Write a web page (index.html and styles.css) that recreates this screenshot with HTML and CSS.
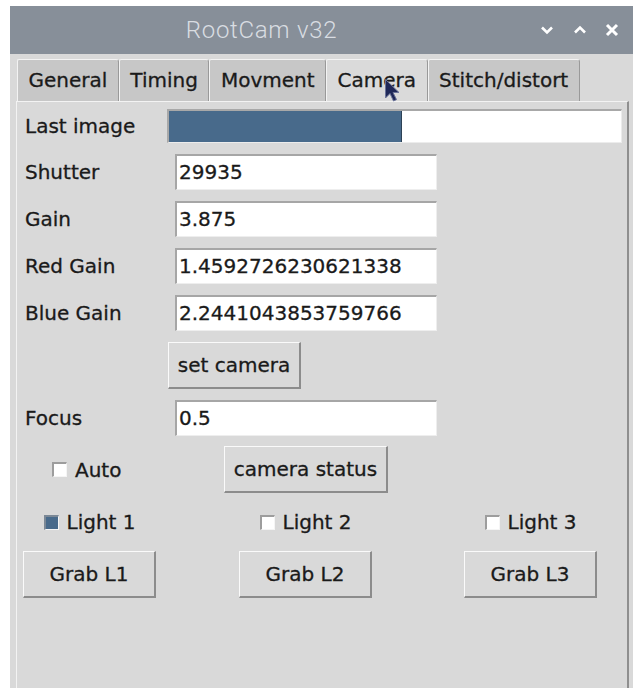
FILE: index.html
```html
<!DOCTYPE html>
<html lang="en">
<head>
<meta charset="utf-8">
<title>RootCam v32</title>
<link rel="stylesheet" href="styles.css">
</head>
<body>
<div class="window">
  <div class="titlebar">
    <div class="title">RootCam v32</div>
    <div class="controls">
      <svg class="ctl" width="16" height="12" viewBox="0 0 16 12"><path d="M3 3.5 L8 8.5 L13 3.5" fill="none" stroke="#fff" stroke-width="2.6" stroke-linejoin="miter"/></svg>
      <svg class="ctl" width="16" height="12" viewBox="0 0 16 12"><path d="M3 8.5 L8 3.5 L13 8.5" fill="none" stroke="#fff" stroke-width="2.6" stroke-linejoin="miter"/></svg>
      <svg class="ctl" width="14" height="14" viewBox="0 0 14 14"><path d="M2 2 L12 12 M12 2 L2 12" fill="none" stroke="#fff" stroke-width="3"/></svg>
    </div>
  </div>

  <div class="notebook">
    <div class="tabs">
      <div class="tab">General</div>
      <div class="tab">Timing</div>
      <div class="tab">Movment</div>
      <div class="tab active">Camera</div>
      <div class="tab">Stitch/distort</div>
    </div>

    <div class="page">
      <div class="form">
        <div class="lbl">Last image</div>
        <div class="progress"><div class="fill" style="width:233px"></div></div>

        <div class="lbl">Shutter</div>
        <div class="entry">29935</div>

        <div class="lbl">Gain</div>
        <div class="entry">3.875</div>

        <div class="lbl">Red Gain</div>
        <div class="entry">1.4592726230621338</div>

        <div class="lbl">Blue Gain</div>
        <div class="entry">2.2441043853759766</div>

        <div></div>
        <div class="btn btn-set">set camera</div>

        <div class="lbl">Focus</div>
        <div class="entry">0.5</div>
      </div>

      <div class="auto-row">
        <div class="check auto-check"><span class="cb"></span><span>Auto</span></div>
        <div class="btn btn-status">camera status</div>
      </div>

      <div class="lights">
        <div class="lcol">
          <div class="check"><span class="cb on"></span><span>Light 1</span></div>
          <div class="btn btn-grab">Grab L1</div>
        </div>
        <div class="lcol">
          <div class="check"><span class="cb"></span><span>Light 2</span></div>
          <div class="btn btn-grab">Grab L2</div>
        </div>
        <div class="lcol">
          <div class="check"><span class="cb"></span><span>Light 3</span></div>
          <div class="btn btn-grab">Grab L3</div>
        </div>
      </div>
    </div>
  </div>

  <svg class="pointer" width="20" height="26" viewBox="0 0 20 26">
    <path d="M1.5 1.5 L1.5 20 L6 15.5 L9.5 23 L12.5 21.6 L9 14.5 L15 14.5 Z" fill="#1f2858" stroke="#6b7399" stroke-width="1" stroke-linejoin="round"/>
  </svg>
</div>
</body>
</html>
```

FILE: styles.css
```css
html, body {
  margin: 0;
  padding: 0;
  background: #ffffff;
}

body {
  overflow: hidden;
}

.window {
  position: relative;
  margin: 6px 0 0 10px;
  height: 682px;
  background: #d9d9d9;
  font-family: "DejaVu Sans", sans-serif;
  font-size: 20px;
  color: #1a1a1a;
  -webkit-text-stroke: 0.3px #1a1a1a;
}

/* title bar */
.titlebar {
  display: flex;
  align-items: center;
  height: 48px;
  background: #878f99;
}

.title {
  flex: 1;
  text-align: center;
  font-family: Roboto, sans-serif;
  font-weight: 300;
  font-size: 24px;
  letter-spacing: 0.7px;
  color: #d9dde2;
  -webkit-text-stroke: 0;
  padding-right: 26px;
}

.controls {
  display: flex;
  align-items: center;
  gap: 17px;
  padding-right: 14px;
}

.ctl {
  display: block;
}

/* notebook */
.notebook {
  padding: 5px 4px 0 6px;
}

.tabs {
  display: flex;
  align-items: flex-end;
  height: 42px;
  padding-left: 1px;
}

.tab {
  box-sizing: border-box;
  height: 42px;
  line-height: 40px;
  padding: 0 10.5px;
  background: #c7c7c7;
  border-top: 1px solid #f3f3f3;
  border-left: 1px solid #f3f3f3;
  border-right: 1px solid #999999;
  border-top-right-radius: 3px;
  border-top-left-radius: 2px;
  white-space: nowrap;
}

.tab.active {
  background: #dadada;
}

.page {
  border-top: 1px solid #f3f3f3;
  border-left: 1px solid #f3f3f3;
  border-right: 2px solid #8f8f8f;
  height: 600px;
  padding: 7px 5px 0 8px;
}

/* label / field grid */
.form {
  display: grid;
  grid-template-columns: 142px 1fr;
  row-gap: 11px;
  align-items: center;
}

.lbl {
  white-space: nowrap;
}

.progress {
  box-sizing: border-box;
  height: 34px;
  background: #ffffff;
  border-top: 2px solid #a8a8a8;
  border-left: 2px solid #a8a8a8;
  border-bottom: 1px solid #ececec;
  border-right: 1px solid #ececec;
}

.fill {
  height: 100%;
  background: #486a8b;
  border-right: 1px solid #2d4256;
  box-sizing: border-box;
}

.entry {
  box-sizing: border-box;
  margin-left: 8px;
  width: 262px;
  height: 36px;
  line-height: 33px;
  padding-left: 2px;
  background: #ffffff;
  border-top: 2px solid #a6a6a6;
  border-left: 2px solid #a6a6a6;
  border-bottom: 1px solid #eeeeee;
  border-right: 1px solid #eeeeee;
  white-space: nowrap;
}

.btn {
  box-sizing: border-box;
  height: 47px;
  display: flex;
  align-items: center;
  justify-content: center;
  background: #d9d9d9;
  border-top: 1px solid #fafafa;
  border-left: 1px solid #fafafa;
  border-bottom: 2px solid #8c8c8c;
  border-right: 2px solid #8c8c8c;
  white-space: nowrap;
}

.btn-set {
  margin-left: 1px;
  width: 133px;
}

/* auto focus + status row */
.auto-row {
  display: flex;
  align-items: center;
  height: 47px;
  margin-top: 10px;
  padding-left: 27px;
}

.auto-check {
  width: 172px;
}

.btn-status {
  width: 164px;
}

.check {
  display: flex;
  align-items: center;
  gap: 8px;
  white-space: nowrap;
}

.cb {
  box-sizing: border-box;
  display: block;
  width: 15px;
  height: 15px;
  background: #ffffff;
  border-top: 2px solid #9d9d9d;
  border-left: 2px solid #9d9d9d;
  border-bottom: 1px solid #f5f5f5;
  border-right: 1px solid #f5f5f5;
}

.cb.on {
  background: #486a8b;
  border-top-color: #7b8896;
  border-left-color: #7b8896;
}

/* light switches with their grab buttons */
.lights {
  display: grid;
  grid-template-columns: 216px 225px 133px;
  margin-left: -2px;
  margin-top: 10px;
}

.lcol {
  width: 133px;
  display: flex;
  flex-direction: column;
  align-items: center;
}

.lcol .check {
  height: 38px;
  margin-bottom: 10px;
}

.btn-grab {
  width: 133px;
}

/* mouse pointer resting on the tab strip */
.pointer {
  position: absolute;
  left: 374px;
  top: 72px;
}
```
